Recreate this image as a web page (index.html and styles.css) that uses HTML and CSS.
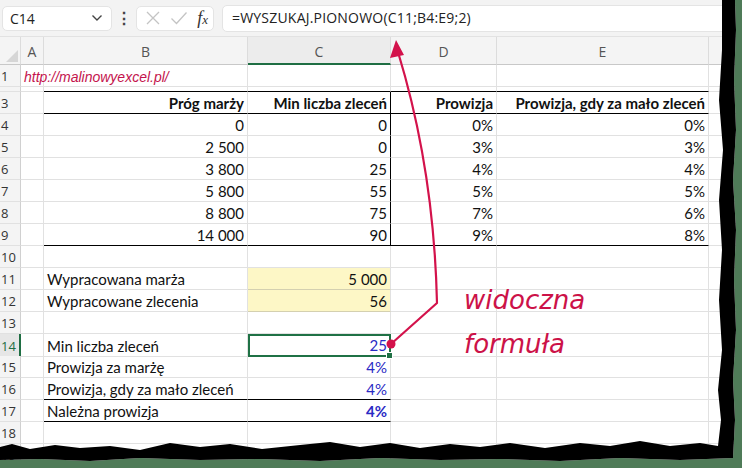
FILE: index.html
```html
<!DOCTYPE html>
<html lang="pl">
<head>
    <meta charset="UTF-8">
    <title>WYSZUKAJ.PIONOWO</title>
    <link rel="stylesheet" href="styles.css">
</head>
<body>
    <div class="sheet">
        <!-- pasek formuły -->
        <div class="formula-bar">
            <div class="name-box">
                <span>C14</span>
                <svg class="chev" width="12" height="8" viewBox="0 0 12 8"><path d="M1.5 1.5 L6 6 L10.5 1.5" fill="none" stroke="#444" stroke-width="1.4"/></svg>
            </div>
            <div class="dots">⋮</div>
            <div class="fx-box">
                <svg width="16" height="16" viewBox="0 0 16 16"><path d="M2 2 L14 14 M14 2 L2 14" stroke="#c4c4c4" stroke-width="1.3"/></svg>
                <svg width="18" height="16" viewBox="0 0 18 16"><path d="M1.5 8.5 L6.5 13.5 L16.5 2.5" fill="none" stroke="#c4c4c4" stroke-width="1.3"/></svg>
                <span class="fx">f<i>x</i></span>
            </div>
            <div class="formula">=WYSZUKAJ.PIONOWO(C11;B4:E9;2)</div>
        </div>

        <!-- nagłówki kolumn -->
        <div class="row col-head">
            <div class="cell corner"><span class="tri"></span></div>
            <div class="cell">A</div>
            <div class="cell">B</div>
            <div class="cell active">C</div>
            <div class="cell">D</div>
            <div class="cell">E</div>
            <div class="cell last"></div>
        </div>

        <div class="row">
            <div class="cell rh">1</div>
            <div class="cell link-cell"><span class="link">http://malinowyexcel.pl/</span></div>
            <div class="cell"></div><div class="cell"></div><div class="cell"></div><div class="cell"></div><div class="cell last"></div>
        </div>
        <div class="row thin">
            <div class="cell rh"></div><div class="cell"></div>
            <div class="cell bb"></div><div class="cell bb"></div><div class="cell bb"></div><div class="cell bb"></div>
            <div class="cell last"></div>
        </div>
        <div class="row">
            <div class="cell rh">3</div><div class="cell"></div>
            <div class="cell num b bb">Próg marży</div>
            <div class="cell num b bb br">Min liczba zleceń</div>
            <div class="cell num b bb">Prowizja</div>
            <div class="cell num b bb">Prowizja, gdy za mało zleceń</div>
            <div class="cell last"></div>
        </div>
        <div class="row">
            <div class="cell rh">4</div><div class="cell"></div>
            <div class="cell num">0</div><div class="cell num br">0</div><div class="cell num">0%</div><div class="cell num">0%</div><div class="cell last"></div>
        </div>
        <div class="row">
            <div class="cell rh">5</div><div class="cell"></div>
            <div class="cell num">2 500</div><div class="cell num br">0</div><div class="cell num">3%</div><div class="cell num">3%</div><div class="cell last"></div>
        </div>
        <div class="row">
            <div class="cell rh">6</div><div class="cell"></div>
            <div class="cell num">3 800</div><div class="cell num br">25</div><div class="cell num">4%</div><div class="cell num">4%</div><div class="cell last"></div>
        </div>
        <div class="row">
            <div class="cell rh">7</div><div class="cell"></div>
            <div class="cell num">5 800</div><div class="cell num br">55</div><div class="cell num">5%</div><div class="cell num">5%</div><div class="cell last"></div>
        </div>
        <div class="row">
            <div class="cell rh">8</div><div class="cell"></div>
            <div class="cell num">8 800</div><div class="cell num br">75</div><div class="cell num">7%</div><div class="cell num">6%</div><div class="cell last"></div>
        </div>
        <div class="row">
            <div class="cell rh">9</div><div class="cell"></div>
            <div class="cell num bb">14 000</div><div class="cell num bb br">90</div><div class="cell num bb">9%</div><div class="cell num bb">8%</div><div class="cell last"></div>
        </div>
        <div class="row">
            <div class="cell rh">10</div><div class="cell"></div>
            <div class="cell"></div><div class="cell"></div><div class="cell"></div><div class="cell"></div><div class="cell last"></div>
        </div>
        <div class="row">
            <div class="cell rh">11</div><div class="cell"></div>
            <div class="cell">Wypracowana marża</div><div class="cell num yellow">5 000</div><div class="cell"></div><div class="cell"></div><div class="cell last"></div>
        </div>
        <div class="row">
            <div class="cell rh">12</div><div class="cell"></div>
            <div class="cell">Wypracowane zlecenia</div><div class="cell num yellow">56</div><div class="cell"></div><div class="cell"></div><div class="cell last"></div>
        </div>
        <div class="row">
            <div class="cell rh">13</div><div class="cell"></div>
            <div class="cell"></div><div class="cell"></div><div class="cell"></div><div class="cell"></div><div class="cell last"></div>
        </div>
        <div class="row">
            <div class="cell rh sel">14</div><div class="cell"></div>
            <div class="cell">Min liczba zleceń</div><div class="cell num blue selected">25<span class="handle"></span></div><div class="cell"></div><div class="cell"></div><div class="cell last"></div>
        </div>
        <div class="row">
            <div class="cell rh">15</div><div class="cell"></div>
            <div class="cell">Prowizja za marżę</div><div class="cell num blue">4%</div><div class="cell"></div><div class="cell"></div><div class="cell last"></div>
        </div>
        <div class="row">
            <div class="cell rh">16</div><div class="cell"></div>
            <div class="cell bb">Prowizja, gdy za mało zleceń</div><div class="cell num blue bb">4%</div><div class="cell"></div><div class="cell"></div><div class="cell last"></div>
        </div>
        <div class="row">
            <div class="cell rh">17</div><div class="cell"></div>
            <div class="cell bb">Należna prowizja</div><div class="cell num blue b bb">4%</div><div class="cell"></div><div class="cell"></div><div class="cell last"></div>
        </div>
        <div class="row">
            <div class="cell rh">18</div><div class="cell"></div>
            <div class="cell"></div><div class="cell"></div><div class="cell"></div><div class="cell"></div><div class="cell last"></div>
        </div>
        <div class="row">
            <div class="cell rh">19</div><div class="cell"></div>
            <div class="cell"></div><div class="cell"></div><div class="cell"></div><div class="cell"></div><div class="cell last"></div>
        </div>

        <!-- adnotacja -->
        <div class="note">
            <div>widoczna</div>
            <div>formuła</div>
        </div>
        <svg class="arrow" width="742" height="468" viewBox="0 0 742 468">
            <path d="M391 344 L437 303 Q434 170 398 52" fill="none" stroke="#d3124b" stroke-width="2.2" stroke-linejoin="round"/>
            <path d="M396 40 L390 58 L404 55 Z" fill="#d3124b"/>
            <circle cx="391" cy="344" r="4.5" fill="#d3124b"/>
        </svg>

        <!-- postrzępiona krawędź -->
        <svg class="torn" width="742" height="468" viewBox="0 0 742 468">
            <path d="M742 0 L742 468 L0 468 L0 460 L40 459 L90 461 L140 458 L200 460 L260 459 L320 461 L380 458 L440 460 L500 459 L560 461 L620 458 L680 460 L733 458 L735 420 L733 380 L736 330 L734 280 L736 230 L733 180 L736 130 L734 80 L736 30 L735 0 Z" fill="#4f7b58"/>
            <path d="M722 0 L735 0 L736 30 L734 80 L736 130 L733 180 L736 230 L734 280 L736 330 L733 380 L735 420 L733 458 L680 460 L620 458 L560 461 L500 459 L440 460 L380 458 L320 461 L260 459 L200 460 L140 458 L90 461 L40 459 L0 460 L0 447 L12 444 L30 449 L55 445 L80 448 L110 446 L140 450 L170 443 L200 447 L230 444 L262 449 L300 445 L330 442 L360 447 L390 443 L420 448 L450 444 L480 447 L510 443 L545 448 L580 443 L610 446 L640 441 L670 446 L700 443 L718 446 L721 420 L718 390 L722 350 L719 300 L722 250 L719 200 L723 150 L719 100 L722 50 Z" fill="#000"/>
        </svg>
    </div>
</body>
</html>
```

FILE: styles.css
```css
body {
    margin: 0;
    background: #fff;
    font-family: Lato, "Liberation Sans", sans-serif;
}
.sheet {
    position: relative;
    width: 742px;
    height: 468px;
    overflow: hidden;
    background: #fff;
}
.formula-bar {
    display: flex;
    align-items: center;
    height: 37px;
    padding: 0 0 0 2px;
    box-sizing: border-box;
    background: #f3f3f3;
    border-bottom: 1px solid #e2e2e2;
    font-family: "Open Sans", "Liberation Sans", sans-serif;
}
.name-box {
    display: flex;
    align-items: center;
    justify-content: space-between;
    width: 110px;
    height: 25px;
    box-sizing: border-box;
    padding: 0 8px 0 7px;
    background: #fff;
    border: 1px solid #e4e4e4;
    border-radius: 5px;
    font-size: 14px;
    color: #222;
}
.dots {
    width: 24px;
    text-align: center;
    font-size: 16px;
    font-weight: bold;
    color: #444;
}
.fx-box {
    display: flex;
    align-items: center;
    justify-content: space-between;
    width: 78px;
    height: 25px;
    box-sizing: border-box;
    padding: 0 5px 0 8px;
    background: #fff;
    border: 1px solid #e4e4e4;
    border-radius: 5px;
}
.fx {
    font-family: "Liberation Serif", serif;
    font-style: italic;
    font-size: 18px;
    color: #333;
}
.fx i {
    font-size: 13px;
}
.formula {
    flex: 1;
    height: 25px;
    margin-left: 8px;
    padding-left: 9px;
    line-height: 24px;
    background: #fff;
    border: 1px solid #e4e4e4;
    border-radius: 5px;
    font-size: 14px;
    letter-spacing: 0.2px;
    color: #222;
}
.row {
    display: grid;
    grid-template-columns: 21px 23px 204px 143px 106px 212px 1fr;
    height: 22px;
}
.row.thin {
    height: 5px;
}
.cell {
    display: flex;
    align-items: flex-end;
    box-sizing: border-box;
    border-right: 1px solid #e1e1e1;
    border-bottom: 1px solid #e1e1e1;
    padding: 0 3px 1px 3px;
    font-size: 15px;
    color: #111;
    white-space: nowrap;
    overflow: visible;
}
.col-head {
    height: 28px;
    background: #f4f4f4;
}
.col-head .cell {
    justify-content: center;
    align-items: center;
    padding: 2px 0 0 0;
    font-family: "Open Sans", "Liberation Sans", sans-serif;
    font-size: 14px;
    color: #555;
    border-right-color: #dcdcdc;
    border-bottom: 1px solid #c8c8c8;
}
.col-head .active {
    background: #ececec;
    border-bottom: 2px solid #1f6e43;
}
.corner {
    position: relative;
}
.tri {
    position: absolute;
    right: 2px;
    bottom: 2px;
    border-left: 12px solid transparent;
    border-bottom: 12px solid #d6d6d6;
}
.rh {
    background: #f4f4f4;
    padding: 0 0 1px 1px;
    font-family: "Open Sans", "Liberation Sans", sans-serif;
    font-size: 13px;
    color: #333;
    border-right-color: #d0d0d0;
    overflow: hidden;
}
.rh.sel {
    color: #1f6e43;
    background: #e6e6e6;
    border-right: 2px solid #1f6e43;
}
.link-cell {
    overflow: visible;
    z-index: 1;
}
.link {
    font-family: "Liberation Sans", sans-serif;
    font-style: italic;
    font-size: 14px;
    color: #c4144d;
}
.num {
    justify-content: flex-end;
}
.b {
    font-weight: bold;
}
.bb {
    border-bottom-color: #000;
}
.br {
    border-right-color: #000;
}
.yellow {
    background: #fdf7c6;
    border-bottom-color: #d4d0b0;
}
.blue {
    color: #2a2ac4;
}
.selected {
    position: relative;
    border: 2px solid #1f7145;
    padding-right: 2px;
}
.handle {
    position: absolute;
    right: -4px;
    bottom: -4px;
    width: 5px;
    height: 5px;
    background: #1f7145;
    border: 1px solid #fff;
}
.last {
    border-right: none;
}
.note {
    position: absolute;
    left: 464px;
    top: 278px;
    font-family: "DejaVu Sans", sans-serif;
    font-style: italic;
    font-size: 26px;
    line-height: 44px;
    color: #cc1248;
    text-shadow: 0 0 3px #fff;
}
.arrow,
.torn {
    position: absolute;
    left: 0;
    top: 0;
    pointer-events: none;
}
```
